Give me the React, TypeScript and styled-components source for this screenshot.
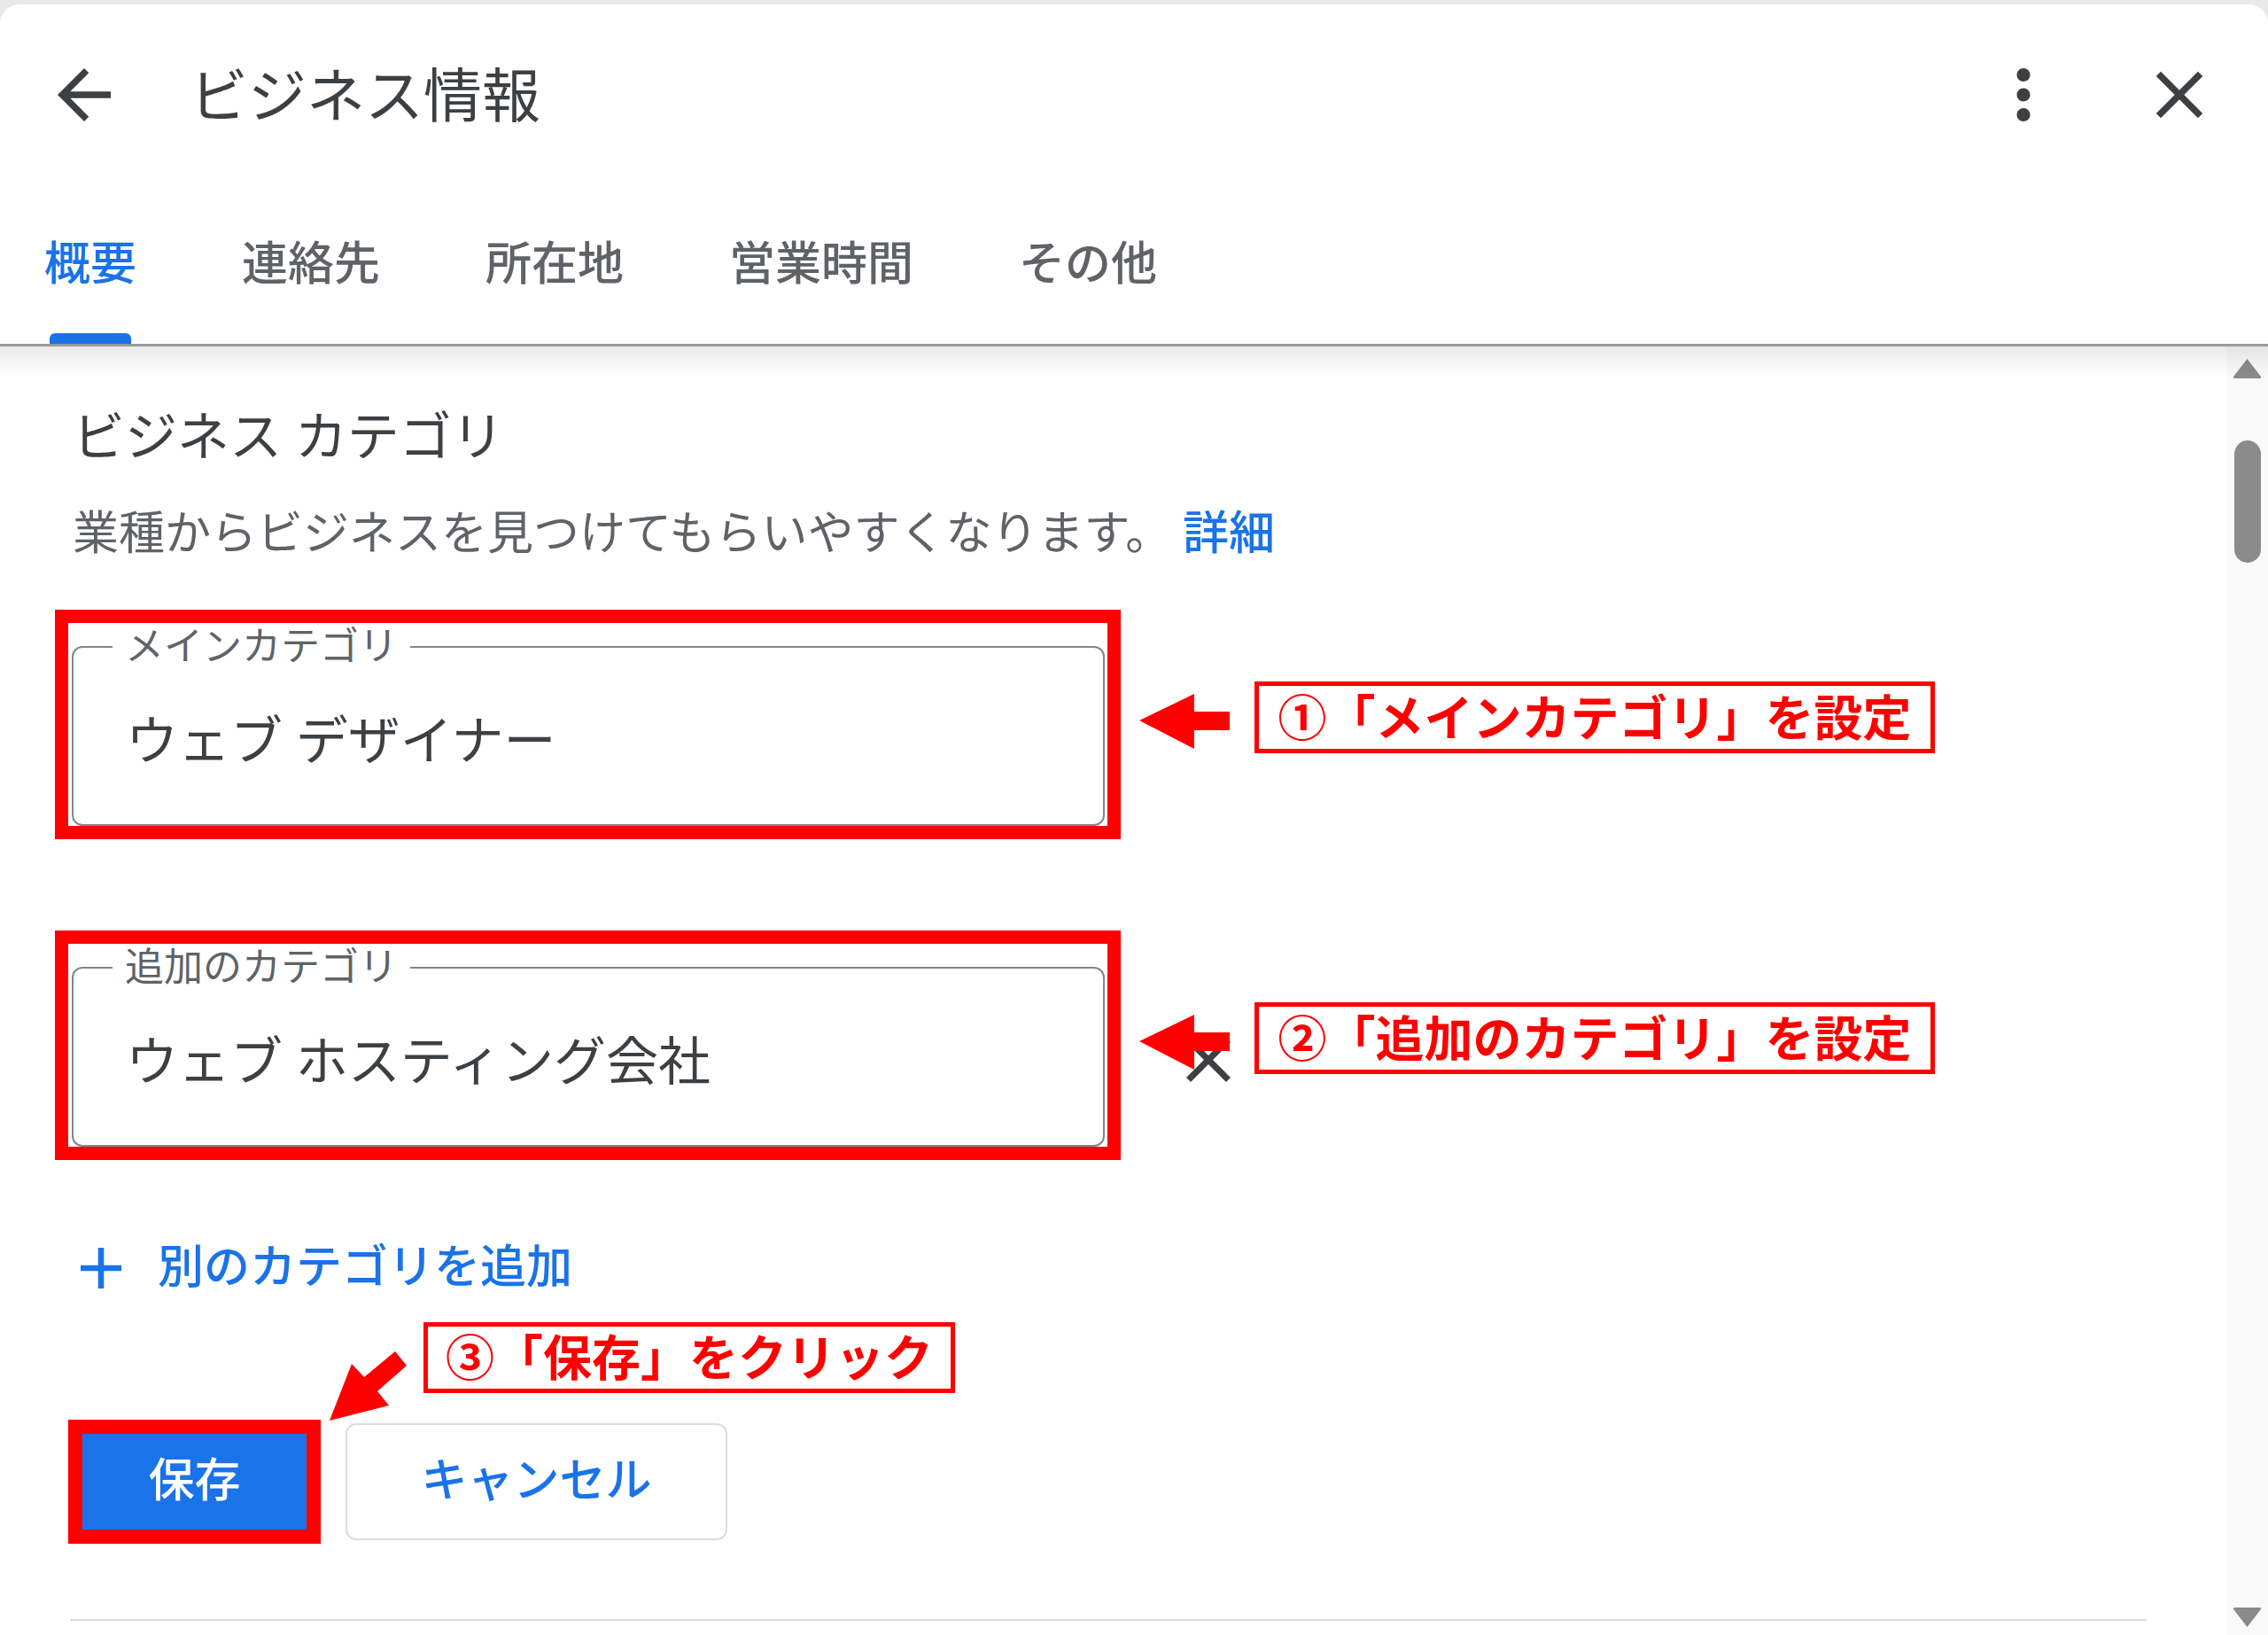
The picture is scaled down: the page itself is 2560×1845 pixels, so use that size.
import styled, { createGlobalStyle } from 'styled-components';

const GlobalStyle = createGlobalStyle`
  html, body {
    margin: 0;
    padding: 0;
  }
  body {
    background: #e9e9e9;
    font-family: Roboto, 'Noto Sans CJK JP', sans-serif;
  }
`;

const tabs = ['概要', '連絡先', '所在地', '営業時間', 'その他'];

const BackIcon = () => (
    <svg viewBox="0 0 24 24" width="90" height="90" fill="currentColor">
        <path d="M20 11H7.83l5.59-5.59L12 4l-8 8 8 8 1.41-1.41L7.83 13H20v-2z" />
    </svg>
);

const MoreIcon = () => (
    <svg viewBox="0 0 24 24" width="90" height="90" fill="currentColor">
        <path d="M12 8c1.1 0 2-.9 2-2s-.9-2-2-2-2 .9-2 2 .9 2 2 2zm0 2c-1.1 0-2 .9-2 2s.9 2 2 2 2-.9 2-2-.9-2-2-2zm0 6c-1.1 0-2 .9-2 2s.9 2 2 2 2-.9 2-2-.9-2-2-2z" />
    </svg>
);

const CLOSE_PATH = 'M19 6.41L17.59 5 12 10.59 6.41 5 5 6.41 10.59 12 5 17.59 6.41 19 12 13.41 17.59 19 19 17.59 13.41 12z';

const CloseIcon = ({ size, box }: { size: number; box: string }) => (
    <svg viewBox={box} width={size} height={size} fill="currentColor">
        <path d={CLOSE_PATH} />
    </svg>
);

const PlusIcon = () => (
    <svg viewBox="5 5 14 14" width="46" height="46" fill="currentColor">
        <path d="M19 13h-6v6h-2v-6H5v-2h6V5h2v6h6v2z" />
    </svg>
);

const LeftArrow = () => (
    <svg width="102" height="62" viewBox="0 0 102 62">
        <polygon points="0,30 62,0 62,20 102,20 102,41 62,41 62,62" fill="#ff0000" />
    </svg>
);

const DiagonalArrow = () => (
    <svg width="88" height="79" viewBox="0 0 88 79">
        <polygon points="0,78 25,14 39,29 74,0 87,16 54,45 67,61" fill="#ff0000" />
    </svg>
);

function CategoryField({ label, value, note, removable, first }: {
    label: string;
    value: string;
    note: string;
    removable?: boolean;
    first?: boolean;
}) {
    return (
        <FieldRow first={first}>
            <Highlight>
                <FieldSet>
                    <Legend>{label}</Legend>
                    <Value>{value}</Value>
                </FieldSet>
            </Highlight>
            {removable && (
                <RemoveButton>
                    <CloseIcon size={50} box="5 5 14 14" />
                </RemoveButton>
            )}
            <ArrowMark>
                <LeftArrow />
            </ArrowMark>
            <Callout left={1354} top={81} width={768} height={81}>{note}</Callout>
        </FieldRow>
    );
}

export default function App() {
    return (
        <>
            <GlobalStyle />
            <Card>
                <Header>
                    <TopBar>
                        <IconButton><BackIcon /></IconButton>
                        <Title>ビジネス情報</Title>
                        <Actions>
                            <IconButton><MoreIcon /></IconButton>
                            <IconButton><CloseIcon size={90} box="0 0 24 24" /></IconButton>
                        </Actions>
                    </TopBar>
                    <TabBar>
                        {tabs.map((t, i) => (
                            <Tab key={t}>
                                <TabLabel active={i === 0}>{t}</TabLabel>
                                <Indicator active={i === 0} />
                            </Tab>
                        ))}
                    </TabBar>
                </Header>
                <Body>
                    <Content>
                        <SectionTitle>ビジネス カテゴリ</SectionTitle>
                        <Description>
                            業種からビジネスを見つけてもらいやすくなります。 <DetailLink href="#">詳細</DetailLink>
                        </Description>
                        <CategoryField
                            first
                            label="メインカテゴリ"
                            value="ウェブ デザイナー"
                            note="①「メインカテゴリ」を設定"
                        />
                        <CategoryField
                            removable
                            label="追加のカテゴリ"
                            value="ウェブ ホスティング会社"
                            note="②「追加のカテゴリ」を設定"
                        />
                        <AddLink href="#">
                            <PlusIcon />
                            <span>別のカテゴリを追加</span>
                        </AddLink>
                        <ButtonRow>
                            <SaveHighlight>
                                <SaveButton>保存</SaveButton>
                            </SaveHighlight>
                            <CancelButton>キャンセル</CancelButton>
                            <DiagonalMark>
                                <DiagonalArrow />
                            </DiagonalMark>
                            <Callout left={401} top={-110} width={600} height={80}>③「保存」をクリック</Callout>
                        </ButtonRow>
                        <Divider />
                    </Content>
                    <Scrollbar>
                        <svg width="35" height="25" viewBox="0 0 35 25">
                            <path d="M17.5 2 L33 22 Q34 24 31 24 L4 24 Q1 24 2 22 Z" fill="#8a8a8a" />
                        </svg>
                        <Thumb />
                        <Spacer />
                        <svg width="35" height="25" viewBox="0 0 35 25">
                            <path d="M17.5 23 L33 3 Q34 1 31 1 L4 1 Q1 1 2 3 Z" fill="#8a8a8a" />
                        </svg>
                    </Scrollbar>
                </Body>
            </Card>
        </>
    );
}

const Card = styled.div`
    margin-top: 5px;
    width: 2560px;
    height: 1840px;
    background: #ffffff;
    border-radius: 22px 22px 0 0;
    display: flex;
    flex-direction: column;
    overflow: hidden;
`;

const Header = styled.header`
    position: relative;
    z-index: 2;
    flex-shrink: 0;
    border-bottom: 3px solid #a9a9a9;

    &::after {
        content: '';
        position: absolute;
        left: 0;
        right: 0;
        top: 100%;
        height: 36px;
        background: linear-gradient(to bottom, rgba(0, 0, 0, 0.09), rgba(0, 0, 0, 0));
    }
`;

const TopBar = styled.div`
    height: 204px;
    display: flex;
    align-items: center;
    padding: 0 55px 0 50px;
`;

const IconButton = styled.button`
    width: 90px;
    height: 90px;
    padding: 0;
    border: none;
    background: none;
    color: #3c4043;
    display: flex;
    align-items: center;
    justify-content: center;
`;

const Title = styled.h1`
    flex: 1;
    margin: 0 0 0 74px;
    padding-top: 5px;
    font-size: 66px;
    line-height: 66px;
    font-weight: 400;
    color: #3c4043;
`;

const Actions = styled.div`
    display: flex;
    gap: 86px;
`;

const TabBar = styled.nav`
    height: 179px;
    display: flex;
    gap: 119px;
    padding-left: 50px;
`;

const Tab = styled.div`
    display: flex;
    flex-direction: column;
    justify-content: flex-end;
`;

const TabLabel = styled.span<{ active?: boolean }>`
    font-size: 52px;
    line-height: 52px;
    font-weight: 500;
    color: ${p => (p.active ? '#1a73e8' : '#5f6368')};
    margin-bottom: 51px;
`;

const Indicator = styled.div<{ active?: boolean }>`
    height: 12px;
    margin: 0 6px;
    border-radius: 6px 6px 0 0;
    background: ${p => (p.active ? '#1a73e8' : 'transparent')};
`;

const Body = styled.main`
    flex: 1;
    display: flex;
    min-height: 0;
`;

const Content = styled.div`
    flex: 1;
    display: flex;
    flex-direction: column;
    align-items: flex-start;
    padding: 73px 90px 0 82px;
`;

const SectionTitle = styled.h2`
    margin: 0;
    font-size: 59px;
    line-height: 59px;
    font-weight: 400;
    color: #3c4043;
`;

const Description = styled.p`
    margin: 54px 0 0;
    font-size: 52px;
    line-height: 52px;
    color: #5f6368;
`;

const DetailLink = styled.a`
    color: #1a73e8;
    text-decoration: none;
    font-weight: 500;
`;

const FieldRow = styled.div<{ first?: boolean }>`
    position: relative;
    display: flex;
    align-items: flex-start;
    margin: ${p => (p.first ? '59px' : '103px')} 0 0 -20px;
`;

const Highlight = styled.div`
    border: 15px solid #ff0000;
    padding: 5px 3px 0 4px;
`;

const FieldSet = styled.fieldset`
    box-sizing: border-box;
    width: 1166px;
    margin: 0;
    padding: 0;
    border: 2px solid #80868b;
    border-radius: 12px;
`;

const Legend = styled.legend`
    margin-left: 44px;
    padding: 0 14px;
    font-size: 44px;
    line-height: 44px;
    color: #5f6368;
`;

const Value = styled.div`
    padding: 55px 0 64px 59px;
    font-size: 59px;
    line-height: 59px;
    color: #3c4043;
`;

const RemoveButton = styled.button`
    margin: 121px 0 0 74px;
    padding: 0;
    width: 50px;
    height: 50px;
    border: none;
    background: none;
    color: #3c4043;
    display: flex;
`;

const ArrowMark = styled.div`
    position: absolute;
    left: 1224px;
    top: 95px;
    display: flex;
`;

const DiagonalMark = styled.div`
    position: absolute;
    left: 295px;
    top: -77px;
    display: flex;
`;

const Callout = styled.div<{ left: number; top: number; width: number; height: number }>`
    position: absolute;
    left: ${p => p.left}px;
    top: ${p => p.top}px;
    width: ${p => p.width}px;
    height: ${p => p.height}px;
    box-sizing: border-box;
    border: 5px solid #ff0000;
    padding-bottom: 7px;
    background: #ffffff;
    display: flex;
    align-items: center;
    justify-content: center;
    font-family: 'Noto Sans CJK JP', sans-serif;
    font-size: 55px;
    line-height: 55px;
    font-weight: 700;
    color: #ff0000;
    white-space: nowrap;
`;

const AddLink = styled.a`
    margin: 96px 0 0 9px;
    display: flex;
    align-items: center;
    gap: 41px;
    font-size: 52px;
    line-height: 52px;
    font-weight: 500;
    color: #1a73e8;
    text-decoration: none;
`;

const ButtonRow = styled.div`
    position: relative;
    display: flex;
    align-items: center;
    gap: 28px;
    margin: 145px 0 0 -5px;
`;

const SaveHighlight = styled.div`
    border: 16px solid #ff0000;
    display: flex;
`;

const SaveButton = styled.button`
    width: 253px;
    height: 108px;
    padding: 0;
    border: none;
    background: #1a73e8;
    color: #ffffff;
    font-family: Roboto, 'Noto Sans CJK JP', sans-serif;
    font-size: 52px;
    line-height: 52px;
    font-weight: 500;
`;

const CancelButton = styled.button`
    width: 431px;
    height: 132px;
    padding: 0;
    border: 2px solid #dadce0;
    border-radius: 12px;
    background: #ffffff;
    color: #1a73e8;
    font-family: Roboto, 'Noto Sans CJK JP', sans-serif;
    font-size: 52px;
    line-height: 52px;
    font-weight: 500;
`;

const Divider = styled.div`
    align-self: stretch;
    height: 2px;
    margin: 85px 0 0 -3px;
    background: #dadce0;
`;

const Scrollbar = styled.div`
    width: 47px;
    flex-shrink: 0;
    background: #f9f9f9;
    display: flex;
    flex-direction: column;
    align-items: center;
    padding: 12px 0 7px;
`;

const Thumb = styled.div`
    margin-top: 69px;
    width: 30px;
    height: 138px;
    border-radius: 15px;
    background: #8b8b8b;
`;

const Spacer = styled.div`
    flex: 1;
`;
